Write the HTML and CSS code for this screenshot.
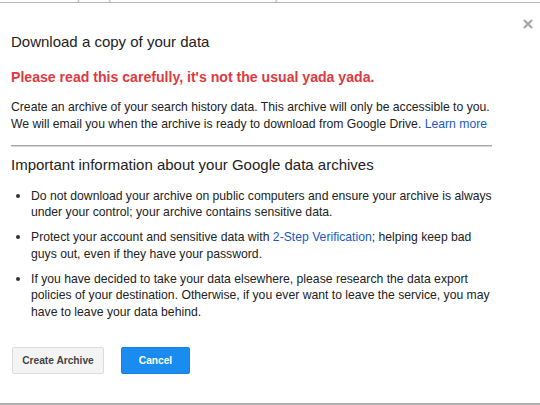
FILE: index.html
```html
<!DOCTYPE html>
<html>
<head>
<meta charset="utf-8">
<title>Download a copy of your data</title>
<link rel="stylesheet" href="styles.css">
</head>
<body>
<div class="page">
  <div class="behind">
    <span class="frag frag-a">Search history and permissions</span>
    <span class="frag frag-b">Web History</span>
  </div>
  <div class="topline"></div>
  <div class="dialog">
    <div class="close-row">
      <svg class="close" width="10" height="10" viewBox="0 0 10 10" aria-label="Close">
        <path d="M1 1 L9 9 M9 1 L1 9" stroke="#a3a3a3" stroke-width="2" fill="none"/>
      </svg>
    </div>
    <h1 class="title">Download a copy of your data</h1>
    <p class="warning">Please read this carefully, it's not the usual yada yada.</p>
    <p class="intro">Create an archive of your search history data. This archive will only be accessible to you. We will email you when the archive is ready to download from Google Drive. <a href="#" class="link">Learn more</a></p>
    <div class="sep"></div>
    <h2 class="heading">Important information about your Google data archives</h2>
    <ul class="points">
      <li><span class="point-text">Do not download your archive on public computers and ensure your archive is always under your control; your archive contains sensitive data.</span></li>
      <li><span class="point-text">Protect your account and sensitive data with <a href="#" class="link">2-Step Verification</a>; helping keep bad guys out, even if they have your password.</span></li>
      <li><span class="point-text">If you have decided to take your data elsewhere, please research the data export policies of your destination. Otherwise, if you ever want to leave the service, you may have to leave your data behind.</span></li>
    </ul>
    <div class="actions">
      <button class="btn btn-grey">Create Archive</button>
      <button class="btn btn-blue">Cancel</button>
    </div>
  </div>
  <div class="bottomline"></div>
</div>
</body>
</html>
```

FILE: styles.css
```css
html, body {
  margin: 0;
  padding: 0;
  background: #ffffff;
}

.page {
  width: 540px;
  height: 405px;
  overflow: hidden;
  font-family: "Liberation Sans", Arial, sans-serif;
  color: #222222;
  display: flex;
  flex-direction: column;
}

.behind {
  height: 2px;
  overflow: hidden;
  display: flex;
  padding-left: 5px;
  flex: none;
}

.frag {
  font-size: 12px;
  line-height: 12px;
  margin-top: -10px;
  color: #b8b8b8;
  white-space: nowrap;
}

.frag-b {
  margin-left: 42px;
}

.topline {
  height: 0;
  border-top: 1px solid #b4b4b4;
  flex: none;
}

.dialog {
  padding-left: 11px;
  flex: 1;
}

.close-row {
  display: flex;
  justify-content: flex-end;
  padding-top: 16px;
  padding-right: 7px;
  height: 10px;
}

.close {
  display: block;
}

.title {
  margin: 4px 0 0 0;
  font-size: 15px;
  line-height: 18px;
  font-weight: normal;
  color: #222222;
}

.warning {
  margin: 18px 0 0 0;
  font-size: 14.1px;
  line-height: 17px;
  font-weight: bold;
  color: #dc3a3f;
}

.intro {
  margin: 13px 0 0 0;
  width: 488px;
  font-size: 12.2px;
  line-height: 17px;
}

.link {
  color: #1a5ac4;
  text-decoration: none;
}

.sep {
  margin-top: 12px;
  width: 481px;
  height: 0;
  border-top: 1px solid #a6a6a6;
  border-bottom: 1px solid #dadada;
}

.heading {
  margin: 9px 0 0 0;
  font-size: 15px;
  line-height: 18px;
  font-weight: normal;
  color: #222222;
}

.points {
  list-style: none;
  margin: 14px 0 0 0;
  padding: 0;
  width: 488px;
}

.points li {
  display: flex;
  font-size: 12.2px;
  line-height: 16.4px;
  margin-top: 8.6px;
}

.points li:first-child {
  margin-top: 0;
}

.points li::before {
  content: "";
  flex: none;
  width: 4px;
  height: 4px;
  border-radius: 50%;
  background: #333333;
  margin: 6px 11px 0 5px;
}

.point-text {
  flex: 1;
}

.actions {
  display: flex;
  gap: 17px;
  margin-top: 27px;
  padding-left: 1px;
}

.btn {
  height: 27px;
  font-family: "Liberation Sans", Arial, sans-serif;
  font-size: 10.2px;
  font-weight: bold;
  border-radius: 2px;
  box-sizing: border-box;
  cursor: pointer;
}

.btn-grey {
  width: 92px;
  padding: 0;
  background: #f4f4f4;
  border: 1px solid #dcdcdc;
  color: #444444;
}

.btn-blue {
  width: 69px;
  padding: 0;
  background: #1a8cef;
  border: 1px solid #1782e0;
  color: #ffffff;
}

.bottomline {
  flex: none;
  height: 0;
  border-top: 1px solid #a9a9a9;
  border-bottom: 1px solid #b5b5b5;
}
```
